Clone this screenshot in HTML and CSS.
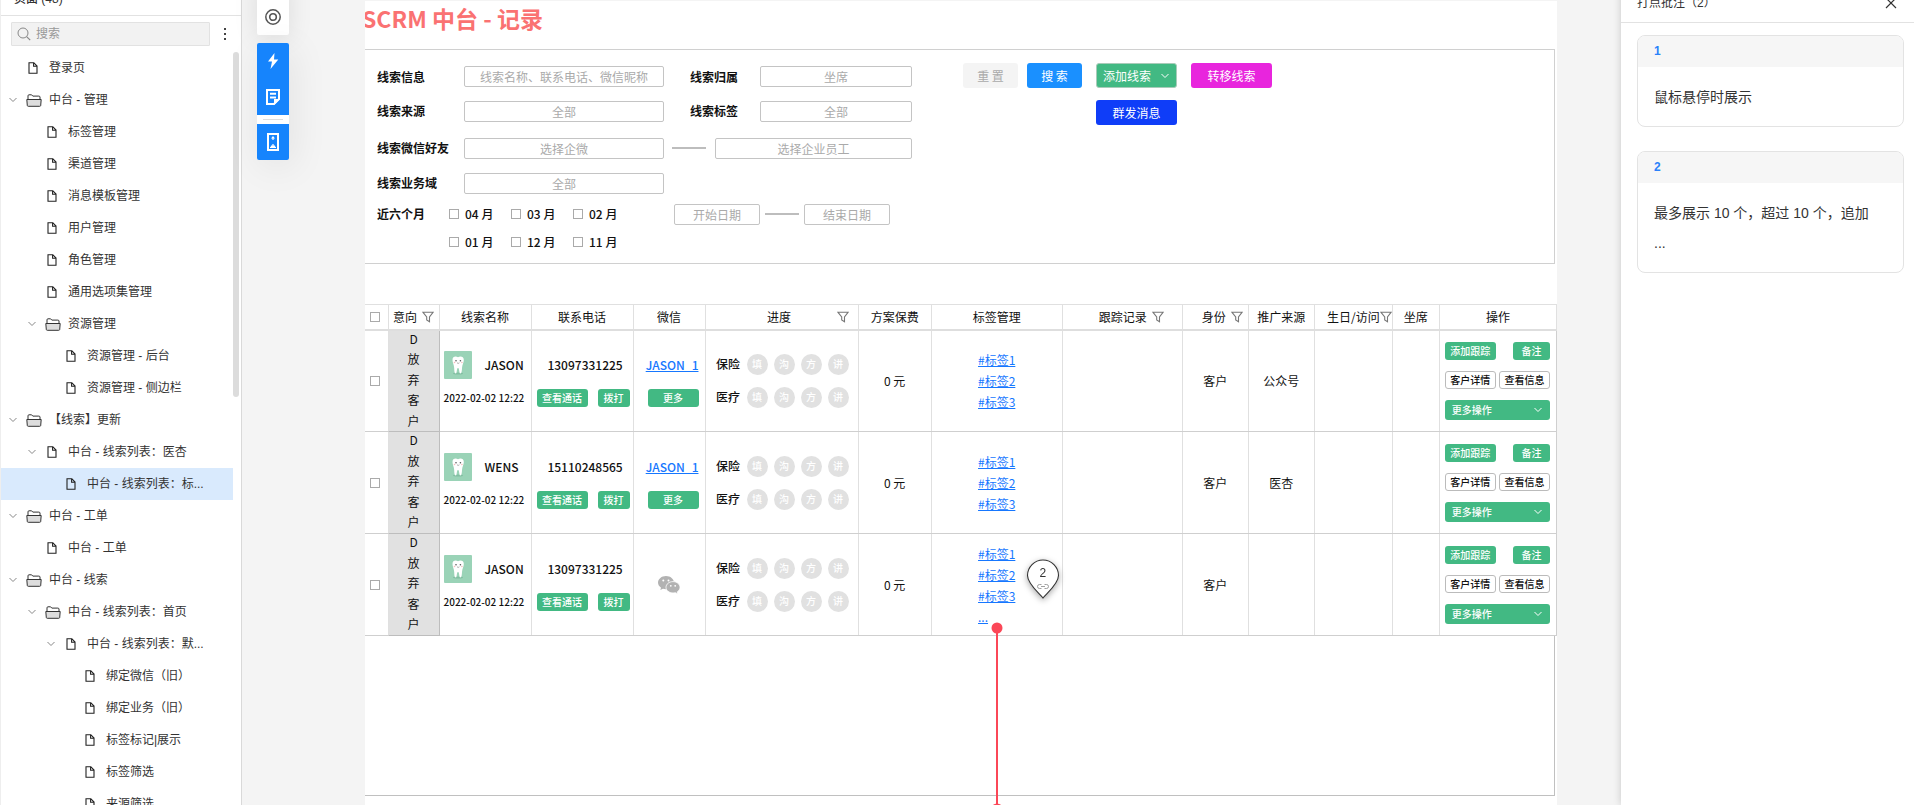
FILE: index.html
```html
<!DOCTYPE html>
<html lang="zh-CN">
<head>
<meta charset="utf-8">
<title>SCRM 中台 - 记录</title>
<link rel="stylesheet" href="styles.css">
</head>
<body>
<svg class="sprite" aria-hidden="true">
  <symbol id="page" viewBox="0 0 10 12"><path d="M1 .7h4.8L9 4v7.3H1zM5.6 1v3.3H9" fill="none" stroke="#222" stroke-width="1.1"/></symbol>
  <symbol id="folder" viewBox="0 0 16 13"><path d="M2 5.500V1.800Q2 .8 3 .8h2.600l1.200 1.300h6Q14 2.100 14 3v2.500" fill="none" stroke="#333"/><path d="M.8 5.500h14.400l-.5 6q-.1.800-1 .800H2.300q-.9 0-1-.800z" fill="#ddd" stroke="#333"/></symbol>
  <symbol id="chev" viewBox="0 0 10 6"><path d="M1.500 1 5 4.500 8.500 1" fill="none" stroke="currentColor" stroke-width="1"/></symbol>
  <symbol id="filter" viewBox="0 0 12 12"><path d="M.8 1.200h10.400L7.500 6v4.800L4.700 9V6z" fill="none" stroke="#777" stroke-width="1.100"/></symbol>
  <symbol id="tooth" viewBox="0 0 28 28"><rect width="28" height="28" rx="1" fill="#9ad3b7"/><ellipse cx="14" cy="22.500" rx="5" ry="1" fill="#82bfa2"/><path d="M8.500 9c0-3.500 3-4 5.500-2.800C16.500 5 19.800 5.500 19.800 9c0 3-1.600 4.500-1.800 8-.1 2.500-.3 5.500-1.600 5.500-1.500 0-.8-5.500-2.400-5.500s-.8 5.500-2.300 5.500c-1.300 0-1.400-3-1.500-5.500C10 13.500 8.500 12 8.500 9z" fill="#fff"/><circle cx="12" cy="9.800" r=".8" fill="#555"/><circle cx="16.400" cy="9.800" r=".8" fill="#555"/><circle cx="10.500" cy="11.500" r=".8" fill="#f6bcbc"/><circle cx="17.900" cy="11.500" r=".8" fill="#f6bcbc"/><path d="M13 11.800q1.200 1.200 2.400 0" fill="none" stroke="#777" stroke-width=".6"/></symbol>
</svg>
<div class="app">
  <aside class="sidebar">
    <header class="side-head">页面 (48)</header>
    <div class="search-row">
      <label class="search"><svg viewBox="0 0 14 14" class="ic14"><circle cx="6" cy="6" r="5" fill="none" stroke="#888"/><path d="m9.600 9.600 3.600 3.600" stroke="#888" stroke-width="1.200"/></svg><input type="text" placeholder="搜索" aria-label="搜索"></label>
      <button class="dots" aria-label="更多"><i></i><i></i><i></i></button>
    </div>
    <div class="tree-wrap">
      <ul class="tree">
        <li class="l0"><span class="arrow"></span><svg class="pg"><use href="#page"/></svg>登录页</li>
        <li class="l0"><svg class="arrow"><use href="#chev"/></svg><svg class="fd"><use href="#folder"/></svg>中台 - 管理</li>
        <li class="l1"><span class="arrow"></span><svg class="pg"><use href="#page"/></svg>标签管理</li>
        <li class="l1"><span class="arrow"></span><svg class="pg"><use href="#page"/></svg>渠道管理</li>
        <li class="l1"><span class="arrow"></span><svg class="pg"><use href="#page"/></svg>消息模板管理</li>
        <li class="l1"><span class="arrow"></span><svg class="pg"><use href="#page"/></svg>用户管理</li>
        <li class="l1"><span class="arrow"></span><svg class="pg"><use href="#page"/></svg>角色管理</li>
        <li class="l1"><span class="arrow"></span><svg class="pg"><use href="#page"/></svg>通用选项集管理</li>
        <li class="l1"><svg class="arrow"><use href="#chev"/></svg><svg class="fd"><use href="#folder"/></svg>资源管理</li>
        <li class="l2"><span class="arrow"></span><svg class="pg"><use href="#page"/></svg>资源管理 - 后台</li>
        <li class="l2"><span class="arrow"></span><svg class="pg"><use href="#page"/></svg>资源管理 - 侧边栏</li>
        <li class="l0"><svg class="arrow"><use href="#chev"/></svg><svg class="fd"><use href="#folder"/></svg>【线索】更新</li>
        <li class="l1"><svg class="arrow"><use href="#chev"/></svg><svg class="pg"><use href="#page"/></svg>中台 - 线索列表：医杏</li>
        <li class="l2 selected"><span class="arrow"></span><svg class="pg"><use href="#page"/></svg>中台 - 线索列表：标...</li>
        <li class="l0"><svg class="arrow"><use href="#chev"/></svg><svg class="fd"><use href="#folder"/></svg>中台 - 工单</li>
        <li class="l1"><span class="arrow"></span><svg class="pg"><use href="#page"/></svg>中台 - 工单</li>
        <li class="l0"><svg class="arrow"><use href="#chev"/></svg><svg class="fd"><use href="#folder"/></svg>中台 - 线索</li>
        <li class="l1"><svg class="arrow"><use href="#chev"/></svg><svg class="fd"><use href="#folder"/></svg>中台 - 线索列表：首页</li>
        <li class="l2"><svg class="arrow"><use href="#chev"/></svg><svg class="pg"><use href="#page"/></svg>中台 - 线索列表：默...</li>
        <li class="l3"><span class="arrow"></span><svg class="pg"><use href="#page"/></svg>绑定微信（旧）</li>
        <li class="l3"><span class="arrow"></span><svg class="pg"><use href="#page"/></svg>绑定业务（旧）</li>
        <li class="l3"><span class="arrow"></span><svg class="pg"><use href="#page"/></svg>标签标记|展示</li>
        <li class="l3"><span class="arrow"></span><svg class="pg"><use href="#page"/></svg>标签筛选</li>
        <li class="l3"><span class="arrow"></span><svg class="pg"><use href="#page"/></svg>来源筛选</li>
      </ul>
      <div class="thumb"></div>
    </div>
  </aside>

  <nav class="tools">
    <button class="tool target" aria-label="定位"><svg viewBox="0 0 16 16" width="16" height="16"><g fill="none" stroke="#555"><circle cx="8" cy="8" r="7.200" stroke-width="1.500"/><circle cx="8" cy="8" r="3.300" stroke-width="1.600"/></g></svg></button>
    <div class="tool-group">
      <button class="tool" aria-label="闪电"><svg viewBox="0 0 16 16" width="16" height="16"><path d="M9.500 0 3 8.500h4L5.500 16 13.300 6.500H9z" fill="#fff"/></svg></button>
      <button class="tool" aria-label="批注"><svg viewBox="0 0 16 16" width="16" height="16"><path d="M2 1h12v9l-5 5H2zM5 4.800h6M5 8.500h6" fill="none" stroke="#fff" stroke-width="2"/><path d="M9 16v-6h6z" fill="#fff"/></svg></button>
      <hr>
      <button class="tool" aria-label="高度"><svg viewBox="0 0 12 18" width="12" height="18"><path d="M1 1h10v16H1z" fill="none" stroke="#fff" stroke-width="2"/><path d="M6 3 8 5.500H6.600V7H5.400V5.500H4zM5.400 11h1.200v1.500H8v1.200h1V15H3v-1.300h1v-1.200h1.400z" fill="#fff"/></svg></button>
    </div>
  </nav>

  <main class="canvas">
    <h1>SCRM 中台 - 记录</h1>
    <form class="filters">
      <div class="fields">
        <div class="row"><label class="name" for="f1">线索信息</label><input class="grow" id="f1" type="text" placeholder="线索名称、联系电话、微信昵称"><label class="name2" for="f2">线索归属</label><input class="w152" id="f2" type="text" placeholder="坐席"></div>
        <div class="row"><label class="name" for="f3">线索来源</label><input class="grow" id="f3" type="text" placeholder="全部"><label class="name2" for="f4">线索标签</label><input class="w152" id="f4" type="text" placeholder="全部"></div>
        <div class="row"><label class="name" for="f5">线索微信好友</label><input class="grow" id="f5" type="text" placeholder="选择企微"><span class="dash wide"></span><input class="w197" type="text" placeholder="选择企业员工" aria-label="选择企业员工"></div>
        <div class="row"><label class="name" for="f6">线索业务域</label><input class="w199" id="f6" type="text" placeholder="全部"></div>
        <div class="row"><b class="name3">近六个月</b><label class="month"><input type="checkbox">04 月</label><label class="month"><input type="checkbox">03 月</label><label class="month"><input type="checkbox">02 月</label><span class="space"></span><input class="w86" type="text" placeholder="开始日期" aria-label="开始日期"><span class="dash"></span><input class="w86" type="text" placeholder="结束日期" aria-label="结束日期"></div>
        <div class="row"><span class="name3"></span><label class="month"><input type="checkbox">01 月</label><label class="month"><input type="checkbox">12 月</label><label class="month"><input type="checkbox">11 月</label></div>
      </div>
      <div class="actions">
        <div class="pair"><button type="button" class="btn reset">重 置</button><button type="button" class="btn find">搜 索</button></div>
        <button type="button" class="btn add">添加线索<svg class="cv"><use href="#chev"/></svg></button>
        <button type="button" class="btn move">转移线索</button>
        <button type="button" class="btn send">群发消息</button>
      </div>
    </form>

    <section class="listing">
      <table>
        <colgroup><col class="c23"><col class="c51"><col class="c92"><col class="c102"><col class="c72"><col class="c153"><col class="c73"><col class="c131"><col class="c120"><col class="c66"><col class="c66"><col class="c78"><col class="c47"><col class="c117"></colgroup>
        <thead><tr>
          <th><input type="checkbox" aria-label="全选"></th>
          <th><span class="th">意向<svg class="ft"><use href="#filter"/></svg></span></th>
          <th>线索名称</th><th>联系电话</th><th>微信</th>
          <th><span class="th far"><span>进度</span><svg class="ft"><use href="#filter"/></svg></span></th>
          <th>方案保费</th><th>标签管理</th>
          <th><span class="th inset">跟踪记录<svg class="ft"><use href="#filter"/></svg></span></th>
          <th><span class="th end">身份<svg class="ft"><use href="#filter"/></svg></span></th>
          <th>推广来源</th>
          <th><span class="th tight">生日/访问<svg class="ft"><use href="#filter"/></svg></span></th>
          <th>坐席</th><th>操作</th>
        </tr></thead>
        <tbody>
          <tr>
            <td><input type="checkbox" aria-label="选择 JASON"></td>
            <td class="intent"><div class="vert"><span>D</span><span>放</span><span>弃</span><span>客</span><span>户</span></div></td>
            <td><div class="stack person"><div class="who"><svg class="av"><use href="#tooth"/></svg>JASON</div><time>2022-02-02 12:22</time></div></td>
            <td><div class="stack"><div class="line">13097331225</div><div class="calls"><button class="sm w51">查看通话</button><button class="sm w32">拨打</button></div></div></td>
            <td><div class="stack"><div class="line"><a href="#">JASON_1</a></div><div class="calls one"><button class="sm w51">更多</button></div></div></td>
            <td><div class="prog"><span>保险</span><i>填</i><i>沟</i><i>方</i><i>讲</i><span>医疗</span><i>填</i><i>沟</i><i>方</i><i>讲</i></div></td>
            <td>0 元</td>
            <td><div class="tags"><a href="#">#标签1</a><a href="#">#标签2</a><a href="#">#标签3</a></div></td>
            <td></td><td>客户</td><td>公众号</td><td></td><td></td>
            <td class="ops"><div class="opgrid"><button class="sm w51">添加跟踪</button><button class="sm w37">备注</button><button class="sm line-btn w51">客户详情</button><button class="sm line-btn w51">查看信息</button><button class="sm more">更多操作<svg class="cv"><use href="#chev"/></svg></button></div></td>
          </tr>
          <tr>
            <td><input type="checkbox" aria-label="选择 WENS"></td>
            <td class="intent"><div class="vert"><span>D</span><span>放</span><span>弃</span><span>客</span><span>户</span></div></td>
            <td><div class="stack person"><div class="who"><svg class="av"><use href="#tooth"/></svg>WENS</div><time>2022-02-02 12:22</time></div></td>
            <td><div class="stack"><div class="line">15110248565</div><div class="calls"><button class="sm w51">查看通话</button><button class="sm w32">拨打</button></div></div></td>
            <td><div class="stack"><div class="line"><a href="#">JASON_1</a></div><div class="calls one"><button class="sm w51">更多</button></div></div></td>
            <td><div class="prog"><span>保险</span><i>填</i><i>沟</i><i>方</i><i>讲</i><span>医疗</span><i>填</i><i>沟</i><i>方</i><i>讲</i></div></td>
            <td>0 元</td>
            <td><div class="tags"><a href="#">#标签1</a><a href="#">#标签2</a><a href="#">#标签3</a></div></td>
            <td></td><td>客户</td><td>医杏</td><td></td><td></td>
            <td class="ops"><div class="opgrid"><button class="sm w51">添加跟踪</button><button class="sm w37">备注</button><button class="sm line-btn w51">客户详情</button><button class="sm line-btn w51">查看信息</button><button class="sm more">更多操作<svg class="cv"><use href="#chev"/></svg></button></div></td>
          </tr>
          <tr>
            <td><input type="checkbox" aria-label="选择 JASON"></td>
            <td class="intent"><div class="vert"><span>D</span><span>放</span><span>弃</span><span>客</span><span>户</span></div></td>
            <td><div class="stack person"><div class="who"><svg class="av"><use href="#tooth"/></svg>JASON</div><time>2022-02-02 12:22</time></div></td>
            <td><div class="stack"><div class="line">13097331225</div><div class="calls"><button class="sm w51">查看通话</button><button class="sm w32">拨打</button></div></div></td>
            <td><svg class="wechat" viewBox="0 0 22 18"><path d="M8 0C3.600 0 0 2.900 0 6.600c0 2.100 1.200 3.900 3 5.100l-.7 2.300 2.700-1.300c.9.300 1.900.5 3 .5 4.400 0 8-2.900 8-6.600S12.400 0 8 0z" fill="#b2b2b2"/><path d="M15 5.600c-3.900 0-7 2.600-7 5.700s3.100 5.700 7 5.700c.8 0 1.600-.1 2.400-.3l2.400 1.300-.6-2.100c1.700-1 2.800-2.700 2.800-4.600 0-3.100-3.100-5.700-7-5.700z" fill="#b2b2b2" stroke="#fff" stroke-width=".8"/><g fill="#fff"><circle cx="5.300" cy="4.600" r="1"/><circle cx="10.500" cy="4.600" r="1"/><circle cx="12.800" cy="9.800" r=".9"/><circle cx="17.200" cy="9.800" r=".9"/></g></svg></td>
            <td><div class="prog"><span>保险</span><i>填</i><i>沟</i><i>方</i><i>讲</i><span>医疗</span><i>填</i><i>沟</i><i>方</i><i>讲</i></div></td>
            <td>0 元</td>
            <td class="anchor"><div class="tags"><a href="#">#标签1</a><a href="#">#标签2</a><a href="#">#标签3</a><a href="#">...</a></div>
              <div class="pin"><svg viewBox="0 0 34 40"><path d="M17 39C13 34 1.500 25 1.500 16.500a15.500 15.500 0 0 1 31 0C32.500 25 21 34 17 39z" fill="#fff" stroke="#333" stroke-width="1.100"/><path d="M15.500 25.500h-2a2 2 0 0 0 0 4h2M18.500 25.500h2a2 2 0 0 1 0 4h-2M15 27.500h4" fill="none" stroke="#888" stroke-width=".8"/></svg><span>2</span></div>
              <svg class="wire" viewBox="0 0 14 190"><path d="M7 6v184" stroke="#fb4757" stroke-width="2"/><circle cx="7" cy="6" r="5.500" fill="#fb4757"/><circle cx="7" cy="188" r="6.500" fill="#fb4757"/></svg>
            </td>
            <td></td><td>客户</td><td></td><td></td><td></td>
            <td class="ops"><div class="opgrid"><button class="sm w51">添加跟踪</button><button class="sm w37">备注</button><button class="sm line-btn w51">客户详情</button><button class="sm line-btn w51">查看信息</button><button class="sm more">更多操作<svg class="cv"><use href="#chev"/></svg></button></div></td>
          </tr>
        </tbody>
      </table>
      <div class="blank"></div>
    </section>
  </main>

  <aside class="notes">
    <header class="notes-head">打点批注（2）<button aria-label="关闭"><svg viewBox="0 0 12 12" width="12" height="12"><path d="m1 1 10 10M11 1 1 11" stroke="#333" stroke-width="1.200"/></svg></button></header>
    <article class="note"><h2>1</h2><p>鼠标悬停时展示</p></article>
    <article class="note"><h2>2</h2><p>最多展示 10 个，超过 10 个，追加<br>...</p></article>
  </aside>
</div>
</body>
</html>
```
FILE: styles.css
```css
* { box-sizing: border-box; }
html, body { height: 100%; }
body {
  margin: 0;
  overflow: hidden;
  background: #f4f4f4;
  color: #333;
  font: 12px/18px "Liberation Sans", "Noto Sans CJK SC", sans-serif;
}
button, input { font: inherit; color: inherit; margin: 0; }
button { padding: 0; border: 0; background: none; white-space: nowrap; }
svg { display: block; flex: none; }
.sprite { position: absolute; width: 0; height: 0; }

/* The page is scrolled a little past its top edge. */
.app { display: flex; height: calc(100vh + 20px); margin-top: -20px; }

/* Page tree */
.sidebar {
  flex: none;
  display: flex;
  flex-direction: column;
  width: 242px;
  background: #fff;
  border-left: 1px solid #eee;
  border-right: 1px solid #d9d9d9;
}
.side-head {
  display: flex;
  align-items: center;
  flex: none;
  height: 36px;
  padding: 2px 0 0 13px;
  border-bottom: 1px solid #e2e2e2;
  font-weight: 500;
}
.search-row { display: flex; align-items: center; flex: none; height: 36px; padding: 0 15px 0 10px; }
.search {
  display: flex;
  align-items: center;
  gap: 5px;
  flex: 1;
  height: 24px;
  padding-left: 5px;
  background: #f2f2f2;
  border: 1px solid #e2e2e2;
  border-radius: 1px;
}
.ic14 { width: 14px; height: 14px; }
.search input { flex: 1; min-width: 0; padding: 0; border: 0; background: none; }
.search input::placeholder { color: #999; }
.dots { display: grid; gap: 3px; margin-left: 14px; }
.dots i { width: 2px; height: 2px; background: #444; }
.tree-wrap { display: flex; flex: 1; min-height: 0; overflow: hidden; }
.tree { flex: 1; min-width: 0; margin: 0; padding: 0; list-style: none; }
.tree li { display: flex; align-items: center; height: 32px; white-space: nowrap; }
.tree .selected { background: #d9eafd; }
.tree .l0 { padding-left: 7px; }
.tree .l1 { padding-left: 26px; }
.tree .l2 { padding-left: 45px; }
.tree .l3 { padding-left: 64px; }
.arrow { flex: none; width: 10px; height: 6px; color: #888; }
.pg { width: 10px; height: 12px; margin: 0 11px 0 10px; }
.fd { width: 16px; height: 13px; margin: 0 7px 0 8px; }
.thumb { flex: none; width: 6px; height: 345px; margin-right: 2px; border-radius: 3px; background: #dcdcdc; }

/* Floating tool column */
.tools { flex: none; width: 32px; margin: 0 76px 0 15px; }
.tool { display: flex; align-items: center; justify-content: center; width: 32px; height: 36px; }
.target { height: 55px; padding-top: 19px; background: #fff; border-radius: 2px; box-shadow: 0 2px 24px #0000001a; }
.tool-group { margin-top: 8px; border-radius: 2px; background: #fff; box-shadow: 4px 6px 36px #00000014; }
.tool-group .tool { background: #1684fc; }
.tool-group .tool:first-child { border-radius: 2px 2px 0 0; }
.tool-group .tool:last-child { border-radius: 0 0 2px 2px; }
.tool-group hr { margin: 4px 6px; border: 0; height: 1px; background: #ddd; }

/* Canvas */
.canvas {
  flex: 1;
  min-width: 0;
  margin: 21px 64px 0 0;
  overflow: hidden;
  background: #fff;
  color: #111;
  font-family: "Noto Sans CJK SC", sans-serif;
}
h1 { margin: 0 0 0 -3px; padding: 1px 0 15px; font-size: 23px; line-height: 32px; color: #fa7272; }
.filters {
  display: flex;
  gap: 51px;
  margin-right: 2px;
  padding: 9px 0 9px 12px;
  border: solid #d0d0d0;
  border-width: 1px 1px 1px 0;
}
.fields { display: grid; flex: none; width: 535px; grid-template-rows: 35px 34px 40px 30px 32px 24px; }
.row { display: flex; align-items: center; }
.row label.name, .name2, .name3 { flex: none; font-weight: 700; }
.name { width: 87px; }
.name2 { width: 70px; margin-left: 26px; }
.name3 { width: 72px; }
.row input[type="text"] {
  min-width: 0;
  height: 21px;
  padding: 0;
  text-align: center;
  background: #fff;
  border: 1px solid #c4c4c4;
  border-radius: 2px;
}
.row input::placeholder { color: #aaa; }
.grow { flex: 1; }
.w86 { width: 86px; }
.w152 { width: 152px; }
.w197 { width: 197px; }
.w199 { width: 200px; }
.space { flex: none; width: 39px; }
.dash { flex: none; width: 34px; height: 2px; margin: 0 5px; background: #bdbdbd; }
.dash.wide { margin: 0 9px 0 8px; }
.month { display: flex; align-items: center; gap: 6px; width: 62px; font-weight: 500; }
input[type="checkbox"] { appearance: none; flex: none; display: block; width: 10px; height: 10px; border: 1px solid #aaa; background: #fff; }

.actions { display: grid; grid-template-columns: auto 81px 81px; gap: 12px 14px; align-content: start; padding-top: 4px; }
.pair { display: flex; gap: 9px; }
.btn { height: 25px; border-radius: 3px; color: #fff; }
.pair .btn { width: 55px; }
.reset { background: #f4f4f4; color: #aaa; }
.find { background: #1a90ff; }
.add { display: flex; align-items: center; justify-content: space-between; padding: 0 6px; background: #42b983; border: 1px solid #a9cbb9; }
.move { background: #e825dd; }
.send { grid-column: 2; background: #0f3df8; }
.cv { width: 10px; height: 6px; }

/* Records */
.listing { margin-top: 40px; }
.blank { height: 160px; margin-right: 2px; border: solid #c0c0c0; border-width: 0 1px 1px 0; }
table { width: 100%; table-layout: fixed; border-collapse: collapse; }
th, td { padding: 0; border: 1px solid #e0e0e0; text-align: center; font-weight: 400; white-space: nowrap; }
th:first-child, td:first-child { border-left: 0; }
th { height: 25px; border-bottom: 2px solid #dedede; }
td { height: 102px; border-bottom-color: #cfcfcf; }
th input, td input { margin: 0 auto; }
th:first-child input, td:first-child input { margin-left: 5px; }
.c23 { width: 23px; } .c51 { width: 51px; } .c92 { width: 92px; } .c102 { width: 102px; }
.c72 { width: 72px; } .c153 { width: 153px; } .c73 { width: 73px; } .c131 { width: 131px; }
.c120 { width: 120px; } .c66 { width: 66px; } .c78 { width: 78px; } .c47 { width: 47px; } .c117 { width: 117px; }
.th { display: flex; align-items: center; justify-content: center; gap: 5px; }
.th.inset { padding-left: 18px; }
.th.end { justify-content: flex-end; padding-right: 5px; }
.th.tight { justify-content: flex-end; gap: 0; }
.th.far { padding: 0 9px 0 21px; }
.th.far span { flex: 1; }
.ft { width: 12px; height: 12px; }
.intent { background: #e1e1e1; border-color: #bdbdbd; vertical-align: top; }
.vert { display: flex; flex-direction: column; justify-content: space-between; height: 98px; line-height: 16px; }
.stack { display: flex; flex-direction: column; gap: 10px; padding-bottom: 3px; }
.line { height: 28px; line-height: 28px; padding-left: 6px; font-weight: 500; }
.person { padding-left: 4px; text-align: left; }
.who { display: flex; align-items: center; gap: 13px; font-weight: 500; }
.av { width: 28px; height: 28px; }
time { font-size: 10px; font-weight: 500; }
.calls { display: flex; justify-content: space-between; padding: 0 3px 0 5px; }
.calls.one { justify-content: flex-end; padding-right: 6px; }
.sm { height: 18px; border-radius: 3px; background: #42b983; color: #fff; font-size: 10px; font-weight: 500; line-height: 16px; }
.w51 { width: 51px; }
.w32 { width: 32px; }
.w37 { width: 37px; }
.prog { display: grid; grid-template-columns: 25px repeat(4, 21px); align-items: center; gap: 12px 6px; padding-left: 10px; font-weight: 500; }
.prog i { width: 21px; height: 21px; border-radius: 50%; background: #e1e1e1; color: #fff; font-size: 10px; line-height: 20px; font-style: normal; }
a { color: #1677ff; text-decoration: underline; }
.tags { display: inline-grid; text-align: left; line-height: 21px; vertical-align: middle; }
.ops { border-color: #cfcfcf; }
.opgrid { display: flex; flex-wrap: wrap; justify-content: space-between; gap: 11px 0; padding: 0 6px 0 5px; }
.line-btn { background: #fff; border: 1px solid #bbb; color: #111; }
.more { display: flex; align-items: center; justify-content: space-between; width: 100%; height: 20px; padding: 0 7px; }
.wechat { width: 22px; height: 18px; margin: 0 auto; }
.anchor { position: relative; }
.pin { position: absolute; top: 25px; right: 2px; width: 34px; height: 40px; filter: drop-shadow(0 2px 3px #0005); }
.pin span { position: absolute; top: 5px; left: 0; width: 100%; font-family: "Liberation Sans", sans-serif; color: #333; }
.wire { position: absolute; top: 88px; left: calc(50% - 7px); width: 14px; height: 190px; }

/* Notes panel */
.notes { flex: none; width: 293px; padding-right: 10px; background: #fff; box-shadow: 0 0 8px #0000002e; }
.notes-head {
  display: flex;
  align-items: center;
  justify-content: space-between;
  height: 43px;
  margin-right: -10px;
  padding: 4px 17px 0 16px;
  border-bottom: 1px solid #e2e2e2;
}
.note { margin: 12px 0 24px 16px; border: 1px solid #e3e3e3; border-radius: 8px; overflow: hidden; }
.note + .note { margin-top: 0; }
.note h2 { margin: 0; padding-left: 16px; background: #f6f6f6; color: #2a82fa; font-size: 12px; line-height: 31px; }
.note p { margin: 0; padding: 15px 16px 14px; font-size: 14px; line-height: 30px; }
```
